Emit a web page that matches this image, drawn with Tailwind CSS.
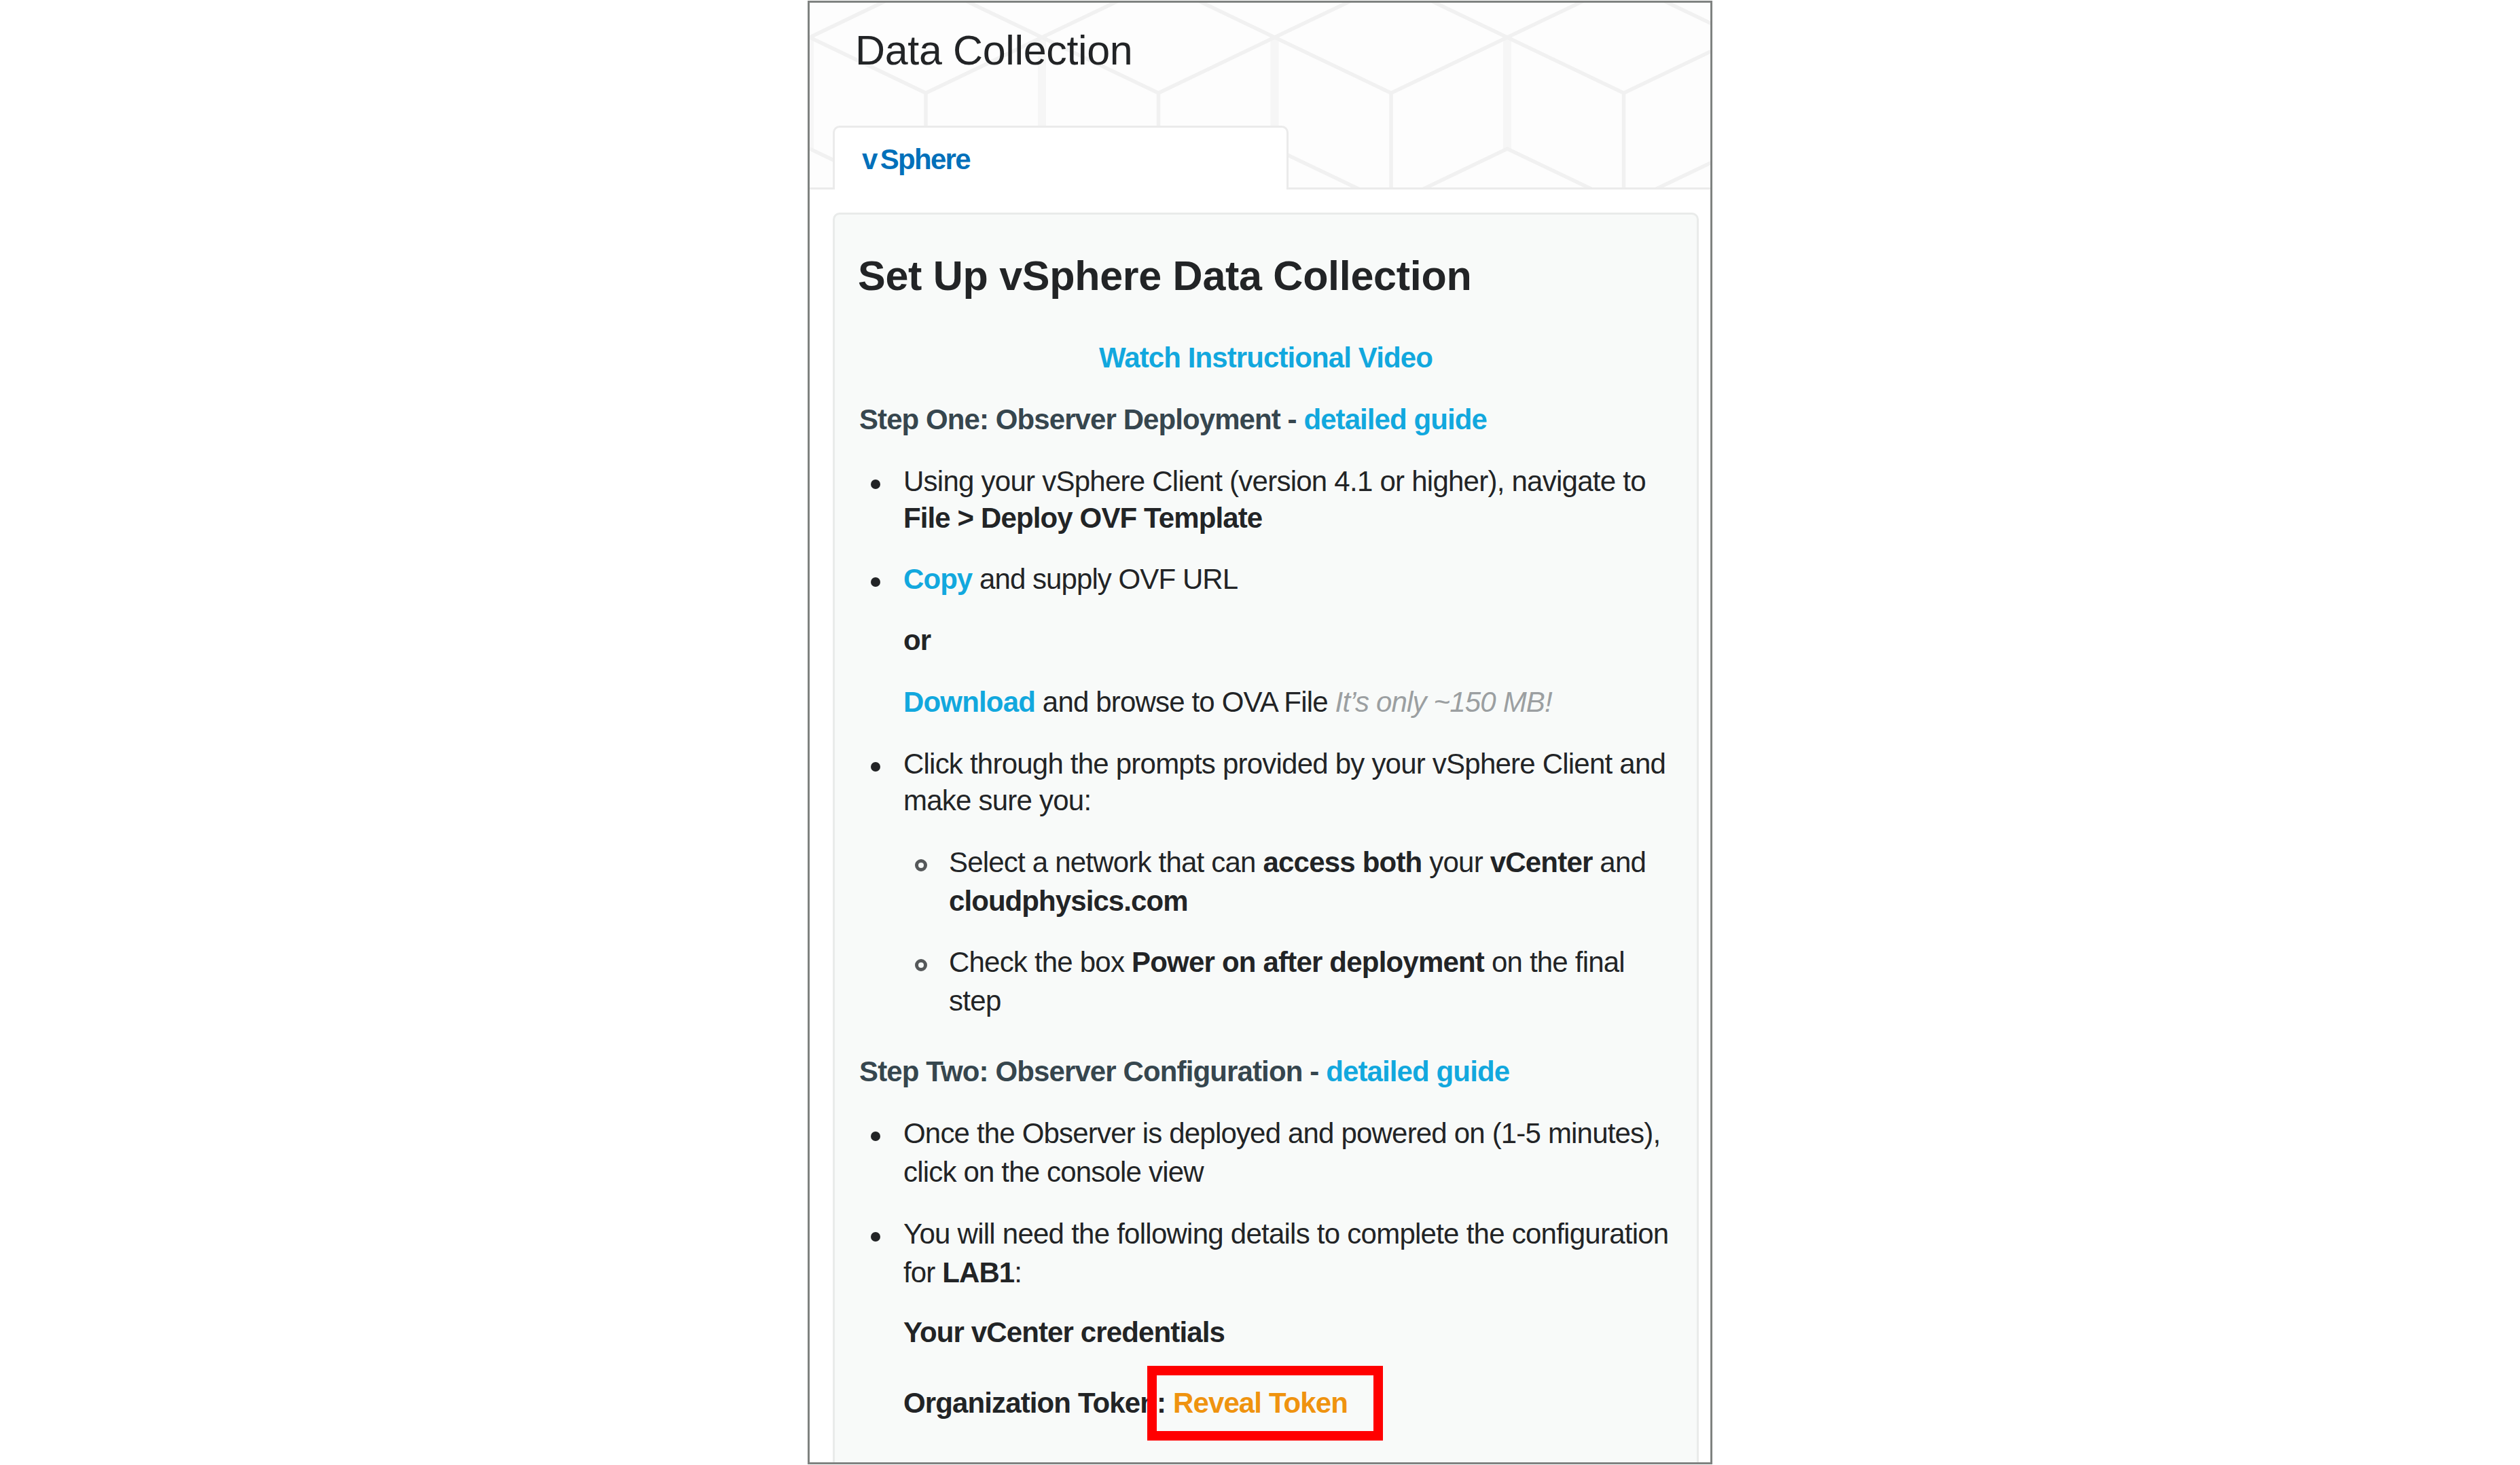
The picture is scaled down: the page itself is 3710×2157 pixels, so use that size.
<!DOCTYPE html>
<html lang="en">
<head>
<meta charset="utf-8">
<title>Data Collection</title>
<script src="https://cdn.jsdelivr.net/npm/@tailwindcss/browser@4"></script>
</head>
<body class="bg-white font-['Liberation_Sans',Arial,sans-serif] text-[#222426]">
<div class="flex h-[2157px] w-[3710px] justify-center overflow-hidden pt-px">
  <main class="flex h-[2155px] w-[1332px] flex-col border-3 border-[#7f8280] bg-white">

    <!-- Header with cube pattern -->
    <header class="relative h-[275px] shrink-0 border-b-3 border-[#ebebeb] bg-[#fdfdfd]">
      <svg class="absolute inset-0 h-[272px] w-[1326px]" viewBox="1192 4 1326 272" fill="none" stroke="#f1f1f1" stroke-width="5.5">
        <g stroke="#f6f6f6" stroke-width="12">
          <path d="M1192 58V220M1534 58V220M1876.500 58V220M2219 58V220"/>
        </g>
        <path d="M1192 55L1363 137L1534 55L1705.500 137L1876.500 55L2048 137L2219 55L2390.500 137L2562 55"/>
        <path d="M1192 55L1363 -27L1534 55L1705.500 -27L1876.500 55L2048 -27L2219 55L2390.500 -27L2562 55"/>
        <path d="M1192 219L1363 301L1534 219L1705.500 301L1876.500 219L2048 301L2219 219L2390.500 301L2562 219"/>
        <path d="M1363 137V276M1705.500 137V276M2048 137V276M2390.500 137V276"/>
      </svg>
      <div class="relative flex h-full flex-col">
        <h1 class="mt-[35px] ml-[67px] text-[61px] leading-[70px] tracking-[-0.35px] whitespace-nowrap">Data Collection</h1>
        <div class="mt-[76px] ml-[34px] h-[94px] w-[671px] shrink-0 rounded-t-[10px] border-3 border-b-0 border-[#ebebeb] bg-white pt-[19px] pl-10 text-[42px] leading-[55px] font-bold tracking-[-1.7px] text-[#0070ba]">v<span class="ml-[5px]">Sphere</span></div>
      </div>
    </header>

    <!-- Setup panel -->
    <section class="mx-[17px] mt-[34px] ml-[34px] flex-1 overflow-hidden rounded-t-[10px] border-3 border-b-0 border-[#e9ebea] bg-[#f8faf9] px-[37px] pt-[55px] text-[42px] leading-[55px] tracking-[-0.88px] whitespace-nowrap">
      <h2 class="-ml-[3px] text-[61px] leading-[70px] font-bold tracking-[-0.28px]">Set Up vSphere Data Collection</h2>
      <p class="mt-[58px] text-center font-bold tracking-[-0.9px] text-[#12a8de]">Watch Instructional Video</p>

      <h3 class="mt-9 -ml-px font-bold tracking-[-0.92px] text-[#36464e]">Step One: Observer Deployment - <span class="text-[#12a8de]">detailed guide</span></h3>
      <ul>
        <li class="mt-[37px] flex gap-[34px] pl-4 leading-[54px]">
          <span class="mt-6 size-3.5 shrink-0 rounded-full bg-[#222426]"></span>
          <div><p class="tracking-[-0.75px]">Using your vSphere Client (version 4.1 or higher), navigate to</p><p class="font-bold">File &gt; Deploy OVF Template</p></div>
        </li>
        <li class="mt-[35px] flex gap-[34px] pl-4">
          <span class="mt-[25px] size-3.5 shrink-0 rounded-full bg-[#222426]"></span>
          <div>
            <p class="tracking-[-0.93px]"><b class="text-[#12a8de]">Copy</b> and supply OVF URL</p>
            <p class="mt-[35px] font-bold">or</p>
            <p class="mt-9 tracking-[-0.83px]"><b class="text-[#12a8de]">Download</b> and browse to OVA File <i class="text-[#9b9fa1]">It’s only ~150 MB!</i></p>
          </div>
        </li>
        <li class="mt-[37px] flex gap-[34px] pl-4 leading-[54px]">
          <span class="mt-6 size-3.5 shrink-0 rounded-full bg-[#222426]"></span>
          <div><p class="tracking-[-0.78px]">Click through the prompts provided by your vSphere Client and</p><p class="tracking-[-0.77px]">make sure you:</p></div>
        </li>
        <li class="mt-[35px] flex gap-8 pl-[81px] leading-[57px]">
          <span class="mt-6 h-[18px] w-[18px] shrink-0 rounded-full border-[5px] border-[#55585a]"></span>
          <div><p class="tracking-[-0.8px]">Select a network that can <b>access both</b> your <b>vCenter</b> and</p><p class="font-bold tracking-[-0.93px]">cloudphysics.com</p></div>
        </li>
        <li class="mt-[33px] flex gap-8 pl-[81px] leading-[57px]">
          <span class="mt-6 h-[18px] w-[18px] shrink-0 rounded-full border-[5px] border-[#55585a]"></span>
          <div><p class="tracking-[-0.8px]">Check the box <b>Power on after deployment</b> on the final</p><p class="tracking-[-0.68px]">step</p></div>
        </li>
      </ul>

      <h3 class="mt-12 -ml-px font-bold tracking-[-0.88px] text-[#36464e]">Step Two: Observer Configuration - <span class="text-[#12a8de]">detailed guide</span></h3>
      <ul>
        <li class="mt-[35px] flex gap-[34px] pl-4 leading-[57px]">
          <span class="mt-[26px] size-3.5 shrink-0 rounded-full bg-[#222426]"></span>
          <div><p class="tracking-[-0.82px]">Once the Observer is deployed and powered on (1-5 minutes),</p><p class="tracking-[-0.82px]">click on the console view</p></div>
        </li>
        <li class="mt-[34px] flex gap-[34px] pl-4 leading-[57px]">
          <span class="mt-[26px] size-3.5 shrink-0 rounded-full bg-[#222426]"></span>
          <div>
            <p class="tracking-[-0.75px]">You will need the following details to complete the configuration</p>
            <p>for <b>LAB1</b>:</p>
            <p class="mt-8 leading-[55px] font-bold">Your vCenter credentials</p>
            <p class="relative mt-[49px] leading-[55px] font-bold">Organization Token: <span class="text-[#ef930f]">Reveal Token</span>
              <span class="absolute -top-[27px] left-[359px] h-[110px] w-[347px] border-14 border-[#ff0000]"></span>
            </p>
          </div>
        </li>
      </ul>
    </section>
  </main>
</div>
</body>
</html>
